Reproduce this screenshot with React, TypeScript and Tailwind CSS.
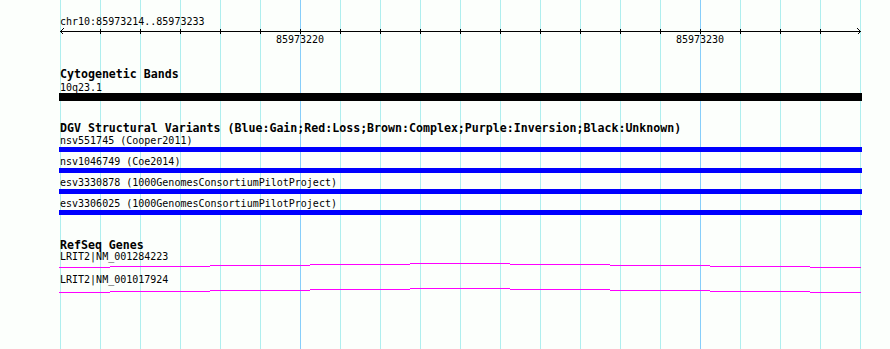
const GRID = Array.from({ length: 21 }, (_, i) => 60 + i * 40);
const TICKS = GRID.slice(1, -1);

const variants = [
  "nsv551745 (Cooper2011)",
  "nsv1046749 (Coe2014)",
  "esv3330878 (1000GenomesConsortiumPilotProject)",
  "esv3306025 (1000GenomesConsortiumPilotProject)",
];

const genes = [
  { name: "LRIT2|NM_001284223", base: 5 },
  { name: "LRIT2|NM_001017924", base: 7 },
];

// intron line drawn in 1px steps, rising toward the middle
const steps: [number, number, number][] = [
  [59, 110, 0],
  [110, 210, 1],
  [210, 310, 2],
  [310, 410, 3],
  [410, 510, 4],
  [510, 610, 3],
  [610, 710, 2],
  [710, 810, 1],
  [810, 861, 0],
];

function Ruler() {
  return (
    <svg width={890} height={18} className="block" shapeRendering="crispEdges">
      <rect x={60} y={3} width={801} height={1} fill="#000" />
      {TICKS.map((x) => (
        <rect key={x} x={x} y={1} width={1} height={5} fill="#000" />
      ))}
      <path d="M63.5 0.5 L60.5 3.5 L63.5 6.5" fill="none" stroke="#000" strokeWidth={1} />
      <path d="M857.5 0.5 L860.5 3.5 L857.5 6.5" fill="none" stroke="#000" strokeWidth={1} />
      <text x={300} y={14.6} fontSize={10} textAnchor="middle" fill="#000">
        85973220
      </text>
      <text x={700} y={14.6} fontSize={10} textAnchor="middle" fill="#000">
        85973230
      </text>
    </svg>
  );
}

function GeneLine({ base }: { base: number }) {
  return (
    <svg width={890} height={12} className="block" shapeRendering="crispEdges">
      {steps.map(([x1, x2, lift]) => (
        <rect key={x1} x={x1} y={base - lift} width={x2 - x1} height={1} fill="#ff00ff" />
      ))}
    </svg>
  );
}

export default function App() {
  return (
    <div className="relative w-[890px] h-[349px] overflow-hidden bg-[#fcfffc] font-['DejaVu_Sans_Mono',monospace] text-black">
      <svg width={890} height={349} className="absolute inset-0" shapeRendering="crispEdges">
        {GRID.map((x) => (
          <rect
            key={x}
            x={x}
            y={0}
            width={1}
            height={349}
            fill={x === 300 || x === 700 ? "#87cefa" : "#afeeee"}
          />
        ))}
      </svg>

      <div className="relative flex flex-col">
        <div className="mt-[16px] h-[12px] pl-[60px] text-[10px] leading-[12px] whitespace-pre">
          chr10:85973214..85973233
        </div>
        <Ruler />

        <div className="mt-[22px] h-[13px] pl-[60px] text-[11.6px] font-bold leading-[13px] whitespace-pre">
          Cytogenetic Bands
        </div>
        <div className="mt-[1px] h-[11px] pl-[60px] text-[10px] leading-[11px] whitespace-pre">
          10q23.1
        </div>
        <div className="ml-[59px] w-[803px] h-[8px] bg-black" />

        <div className="mt-[21px] h-[13px] pl-[60px] text-[11.6px] font-bold leading-[13px] whitespace-pre">
          DGV Structural Variants (Blue:Gain;Red:Loss;Brown:Complex;Purple:Inversion;Black:Unknown)
        </div>
        {variants.map((v, i) => (
          <div key={v} className={i === 0 ? "flex flex-col" : "mt-[4px] flex flex-col"}>
            <div className="h-[11px] pl-[60px] text-[10px] leading-[11px] whitespace-pre">{v}</div>
            <div className="mt-[1px] ml-[59px] w-[803px] h-[5px] bg-[#0000ff]" />
          </div>
        ))}

        <div className="mt-[24px] h-[12px] pl-[60px] text-[11.6px] font-bold leading-[12px] whitespace-pre">
          RefSeq Genes
        </div>
        {genes.map((g) => (
          <div key={g.name} className="flex flex-col">
            <div className="h-[11px] pl-[60px] text-[10px] leading-[11px] whitespace-pre">{g.name}</div>
            <GeneLine base={g.base} />
          </div>
        ))}
      </div>
    </div>
  );
}
